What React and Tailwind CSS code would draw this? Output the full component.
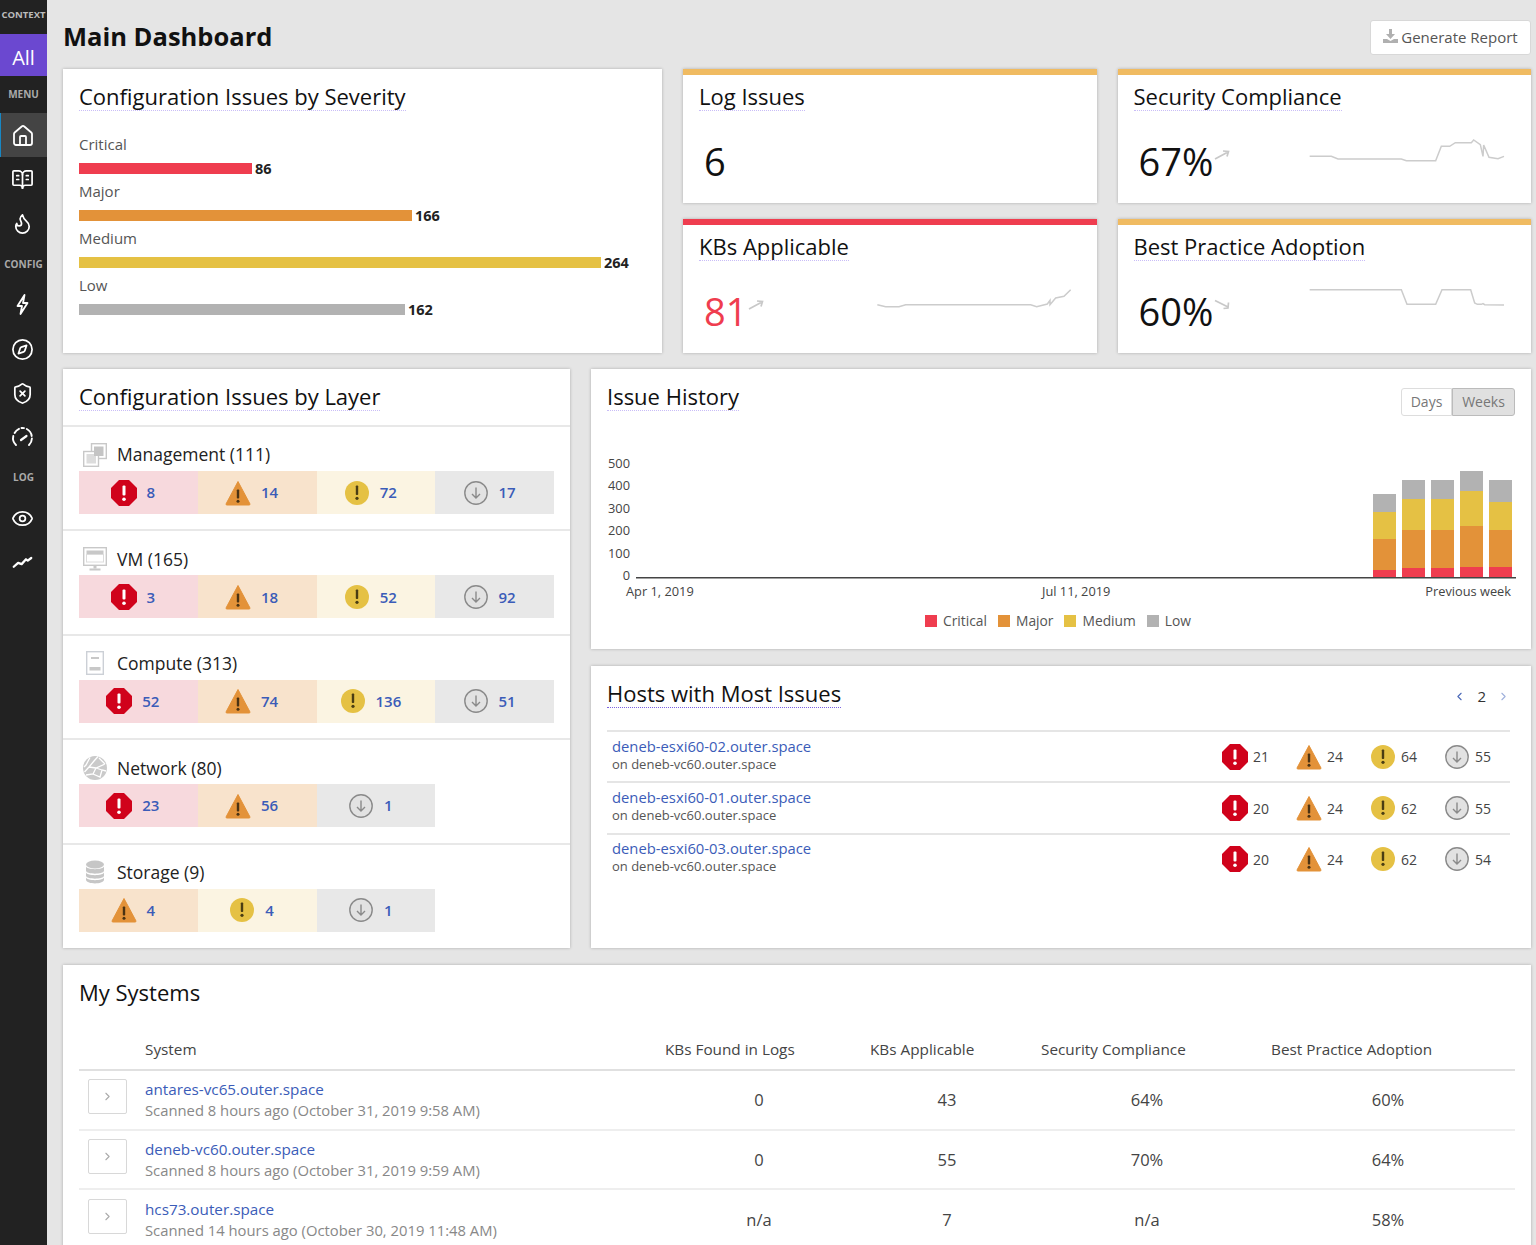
import React from "react";
import { Home, BookOpenText, Flame, Compass, ShieldX, Eye, ChevronLeft, ChevronRight } from "lucide-react";

// severity icons, shared by the layer list and the hosts list
const Critical = () => (
    <svg width="26" height="26" viewBox="0 0 26 26" className="shrink-0">
        <polygon points="8,0 18,0 26,8 26,18 18,26 8,26 0,18 0,8" fill="#d0021b" strokeLinejoin="round" />
        <rect x="11.5" y="5.5" width="3" height="10" rx="1" fill="#fff" />
        <circle cx="13" cy="19.3" r="1.8" fill="#fff" />
    </svg>
);

const Major = () => (
    <svg width="26" height="26" viewBox="0 0 26 26" className="shrink-0">
        <path d="M13 1.5 L25 24 Q25.2 25 24 25 L2 25 Q0.8 25 1 24 Z" fill="#e39239" stroke="#e39239" strokeLinejoin="round" />
        <rect x="11.8" y="9.5" width="2.4" height="9" rx="0.8" fill="#4a3213" />
        <circle cx="13" cy="21.3" r="1.5" fill="#4a3213" />
    </svg>
);

const Medium = () => (
    <svg width="26" height="26" viewBox="0 0 26 26" className="shrink-0">
        <circle cx="13" cy="13" r="12" fill="#e5c144" />
        <rect x="11.8" y="5.5" width="2.4" height="9.5" rx="0.8" fill="#4a3d13" />
        <circle cx="13" cy="18.3" r="1.6" fill="#4a3d13" />
    </svg>
);

const Low = () => (
    <svg width="26" height="26" viewBox="0 0 26 26" className="shrink-0">
        <circle cx="13" cy="13" r="11.2" fill="#e2e2e2" stroke="#8a8a8a" strokeWidth="1.4" />
        <path d="M13 7.5 V18 M9 14 L13 18 L17 14" fill="none" stroke="#8a8a8a" strokeWidth="1.4" />
    </svg>
);

const sevIcons = { critical: Critical, major: Major, medium: Medium, low: Low };
const sevBg = { critical: "bg-[#f7d9dd]", major: "bg-[#f8e3cc]", medium: "bg-[#fbf4e2]", low: "bg-[#e8e8e8]" };

// layer icons
const ManagementIcon = () => (
    <svg width="24" height="24" viewBox="0 0 24 24" fill="none">
        <rect x="8.5" y="0.7" width="14.8" height="14.8" stroke="#c8c8c8" strokeWidth="1.4" />
        <rect x="0.7" y="8.5" width="14.8" height="14.8" stroke="#c8c8c8" strokeWidth="1.4" fill="#fff" />
        <rect x="11" y="3.5" width="9.5" height="9.5" fill="#c4c4c4" />
        <rect x="3.5" y="11" width="9.5" height="9.5" fill="#dcdcdc" />
        <rect x="11" y="11" width="2" height="2" fill="#c4c4c4" />
    </svg>
);

const VmIcon = () => (
    <svg width="24" height="24" viewBox="0 0 24 24" fill="none">
        <rect x="0.7" y="0.7" width="22.6" height="17.6" stroke="#c8c8c8" strokeWidth="1.4" />
        <rect x="3.5" y="3.5" width="17" height="4" fill="#c8c8c8" />
        <rect x="3.5" y="7.5" width="17" height="7.5" fill="none" stroke="#dcdcdc" />
        <rect x="10.5" y="18.5" width="3" height="3" fill="#c8c8c8" />
        <rect x="6.5" y="21.5" width="11" height="2" fill="#c8c8c8" />
    </svg>
);

const ComputeIcon = () => (
    <svg width="24" height="24" viewBox="0 0 24 24" fill="none">
        <rect x="3.7" y="0.7" width="16.6" height="22.6" stroke="#ccd0d6" strokeWidth="1.4" />
        <rect x="8" y="6" width="8" height="2" fill="#c8c8c8" />
        <rect x="6.5" y="16" width="11" height="3.5" fill="#c8c8c8" />
    </svg>
);

const NetworkIcon = () => (
    <svg width="24" height="24" viewBox="0 0 24 24">
        <circle cx="12" cy="12" r="12" fill="#cacaca" />
        <path d="M7 1.5 L3 9 L1 11 M15 0.5 L11 5 L6 11 L1.5 16 M6 11 L13 12 L22 8 M13 12 L10 18 L3 19 M13 12 L19 14 L23 15 M10 18 L17 21 L19 14 M16 2 L22 8" fill="none" stroke="#fff" strokeWidth="1.3" />
    </svg>
);

const StorageIcon = () => (
    <svg width="24" height="24" viewBox="0 0 24 24" fill="#c6c6c6">
        <ellipse cx="12" cy="4.5" rx="9" ry="4" />
        <path d="M3 6.5 C4 10 20 10 21 6.5 V11 C20 14.5 4 14.5 3 11 Z" />
        <path d="M3 12.5 C4 16 20 16 21 12.5 V16 C20 19.5 4 19.5 3 16 Z" />
        <path d="M3 17.5 C4 21 20 21 21 17.5 V20 C20 24.5 4 24.5 3 20 Z" />
    </svg>
);

// sidebar icons the icon package has no close match for
const BoltIcon = () => (
    <svg width="23" height="23" viewBox="0 0 23 23" fill="none" stroke="#fff" strokeWidth="1.8" strokeLinejoin="round">
        <path d="M13.5 2 L6.5 13 H11 L9.5 21 L16.5 10 H12 Z" />
    </svg>
);

const GaugeIcon = () => (
    <svg width="23" height="23" viewBox="0 0 23 23" fill="none" stroke="#fff" strokeWidth="1.9" strokeLinecap="round">
        <path d="M5 19 A9.5 9.5 0 0 1 2.3 10" />
        <path d="M3.6 7 A9.5 9.5 0 0 1 8 2.8" />
        <path d="M10.5 2 A9.5 9.5 0 0 1 13 2.1" />
        <path d="M15.8 3 A9.5 9.5 0 0 1 20.7 10" />
        <path d="M20.9 12.5 A9.5 9.5 0 0 1 18 19" />
        <path d="M10 14 L15.5 10" strokeWidth="2.2" />
    </svg>
);

const TrendIcon = () => (
    <svg width="21" height="21" viewBox="0 0 24 24" fill="none" stroke="#fff" strokeWidth="2.6" strokeLinecap="round" strokeLinejoin="round">
        <path d="M2 18 L7 13.5 L11 15 L16 9.5 L18 11 L22 8" />
    </svg>
);

const SideLabel = ({ children, className }) => (
    <div className={`text-center text-[10px] font-bold text-[#aaa] ${className}`}>{children}</div>
);

const SideIcon = ({ icon: Icon, className }) => (
    <div className={`flex justify-center pr-[2px] text-white ${className}`}>
        <Icon size={23} strokeWidth={1.8} />
    </div>
);

const Sidebar = () => (
    <div className="w-[47px] shrink-0 bg-[#222222]">
        <div className="h-[34px] pt-[8px] text-center text-[9.5px] leading-[14px] font-bold text-[#bbb]">CONTEXT</div>
        <div className="h-[42px] bg-[#6b48d0] text-center text-[20px] leading-[47px] text-white">All</div>
        <SideLabel className="mt-[11px] h-[26px] leading-[14px]">MENU</SideLabel>
        <div className="flex h-[44px] items-center justify-center border-l border-[#1787c4] bg-[#444444] pt-[2px] pr-[3px] text-white">
            <Home size={24} strokeWidth={1.8} />
        </div>
        <SideIcon icon={BookOpenText} className="mt-[11px]" />
        <SideIcon icon={Flame} className="mt-[21px]" />
        <SideLabel className="mt-[22px] leading-[14px]">CONFIG</SideLabel>
        <SideIcon icon={BoltIcon} className="mt-[22px]" />
        <SideIcon icon={Compass} className="mt-[22px]" />
        <SideIcon icon={ShieldX} className="mt-[21px]" />
        <SideIcon icon={GaugeIcon} className="mt-[21px]" />
        <SideLabel className="mt-[21px] leading-[14px]">LOG</SideLabel>
        <SideIcon icon={Eye} className="mt-[23px]" />
        <SideIcon icon={TrendIcon} className="mt-[21px]" />
    </div>
);

const Title = ({ children, underline = "border-[#c9bdf7]" }) => (
    <h2 className={`inline-block h-[30px] border-b border-dotted text-[22px] leading-[31px] font-medium text-[#111] ${underline}`}>{children}</h2>
);

const severityBars = [
    { label: "Critical", value: 86, width: "w-[173px]", color: "bg-[#ef3d4f]" },
    { label: "Major", value: 166, width: "w-[333px]", color: "bg-[#e39239]" },
    { label: "Medium", value: 264, width: "w-[522px]", color: "bg-[#e5c144]" },
    { label: "Low", value: 162, width: "w-[326px]", color: "bg-[#b2b2b2]" },
];

const SeverityCard = () => (
    <div className="h-[284px] w-[599px] shrink-0 bg-white px-4 pt-[12px] shadow-[0_0_3px_rgba(0,0,0,0.25)]">
        <Title>Configuration Issues by Severity</Title>
        <div className="mt-[23px]">
            {severityBars.map((b) => (
                <div key={b.label} className="h-[47px]">
                    <div className="h-[24px] text-[15px] leading-[21px] text-[#555]">{b.label}</div>
                    <div className="flex h-[21px] items-center">
                        <div className={`h-[11px] ${b.width} ${b.color}`}></div>
                        <span className="ml-[3px] text-[14.5px] font-bold text-[#222]">{b.value}</span>
                    </div>
                </div>
            ))}
        </div>
    </div>
);

const Arrow = ({ down }) => (
    <svg width="16" height="12" viewBox="0 0 16 12" fill="none" stroke="#c8c8c8" strokeWidth="1.7" className="mt-[-12px] ml-[1px]">
        {down ? <path d="M1 1.5 L14 8 M14.5 3.5 L14 9 L9.5 9.5" /> : <path d="M1 10 L14 3 M9 2 L14.5 2.5 L13 7.5" />}
    </svg>
);

// sparkline points are in the same units, 3 per screen pixel
const Spark = ({ points }) => (
    <svg width="197" height="27" viewBox="595 412 591 81" fill="none" stroke="#cccccc" strokeWidth="4.5" className="absolute top-[62px] right-[26px]">
        <polyline points={points} />
    </svg>
);

const StatCard = ({ title, value, bar, valueColor = "text-[#111]", arrow, spark }) => (
    <div className={`relative h-[134px] border-t-[6px] bg-white px-4 pt-[6px] shadow-[0_0_3px_rgba(0,0,0,0.25)] ${bar}`}>
        <Title>{title}</Title>
        <div className={`mt-[24px] flex items-center pl-[5px] text-[38px] leading-[52px] ${valueColor}`}>
            <span>{value}</span>
            {arrow && <Arrow down={arrow === "down"} />}
        </div>
        {spark && <Spark points={spark} />}
    </div>
);

const layers = [
    { name: "Management (111)", icon: ManagementIcon, counts: [["critical", 8], ["major", 14], ["medium", 72], ["low", 17]] },
    { name: "VM (165)", icon: VmIcon, counts: [["critical", 3], ["major", 18], ["medium", 52], ["low", 92]] },
    { name: "Compute (313)", icon: ComputeIcon, counts: [["critical", 52], ["major", 74], ["medium", 136], ["low", 51]] },
    { name: "Network (80)", icon: NetworkIcon, counts: [["critical", 23], ["major", 56], ["low", 1]] },
    { name: "Storage (9)", icon: StorageIcon, counts: [["major", 4], ["medium", 4], ["low", 1]] },
];

const LayerCard = () => (
    <div className="h-[579px] w-[507px] shrink-0 bg-white shadow-[0_0_3px_rgba(0,0,0,0.25)]">
        <div className="h-[58px] border-b-2 border-[#e8e8e8] px-4 pt-[12px]">
            <Title>Configuration Issues by Layer</Title>
        </div>
        {layers.map((layer) => (
            <div key={layer.name} className="h-[104.4px] border-b-2 border-[#e8e8e8] px-4 last:border-b-0">
                <div className="flex h-[44px] items-center gap-[10px] pt-[11px] pl-[4px]">
                    <layer.icon />
                    <span className="text-[17.5px] font-medium text-[#222]">{layer.name}</span>
                </div>
                <div className="grid h-[43px] grid-cols-4">
                    {layer.counts.map(([sev, n]) => {
                        const Icon = sevIcons[sev];
                        return (
                            <div key={sev} className={`flex items-center justify-center gap-[10px] pr-[11px] ${sevBg[sev]}`}>
                                <Icon />
                                <span className="text-[15px] font-semibold text-[#3b5cb8]">{n}</span>
                            </div>
                        );
                    })}
                </div>
            </div>
        ))}
    </div>
);

const stacks = [
    { x: 1373, top: 494, yellow: 512, orange: 539, red: 570 },
    { x: 1402, top: 480, yellow: 499, orange: 530, red: 568 },
    { x: 1431, top: 480, yellow: 499, orange: 530, red: 568 },
    { x: 1460, top: 471, yellow: 491, orange: 526, red: 567 },
    { x: 1489, top: 480, yellow: 502, orange: 530, red: 567 },
];

const yTicks = [["500", 468], ["400", 490], ["300", 513], ["200", 535], ["100", 558], ["0", 580]];

const HistoryChart = () => (
    <svg width="940" height="168" viewBox="591 437 940 168" fontFamily="'Open Sans', sans-serif" fontSize="12.8" fill="#444">
        {yTicks.map(([t, y]) => (
            <text key={t} x="630" y={y} textAnchor="end">{t}</text>
        ))}
        {stacks.map((s) => (
            <g key={s.x}>
                <rect x={s.x} y={s.top} width="23" height={s.yellow - s.top} fill="#b2b2b2" />
                <rect x={s.x} y={s.yellow} width="23" height={s.orange - s.yellow} fill="#e5c144" />
                <rect x={s.x} y={s.orange} width="23" height={s.red - s.orange} fill="#e39239" />
                <rect x={s.x} y={s.red} width="23" height={577 - s.red} fill="#ef3d4f" />
            </g>
        ))}
        <rect x="636" y="577" width="880" height="1.5" fill="#444" />
        <text x="626" y="596">Apr 1, 2019</text>
        <text x="1042" y="596">Jul 11, 2019</text>
        <text x="1511" y="596" textAnchor="end">Previous week</text>
    </svg>
);

const legend = [
    ["Critical", "bg-[#ef3d4f]"],
    ["Major", "bg-[#e39239]"],
    ["Medium", "bg-[#e5c144]"],
    ["Low", "bg-[#b2b2b2]"],
];

const HistoryCard = () => (
    <div className="h-[280px] bg-white shadow-[0_0_3px_rgba(0,0,0,0.25)]">
        <div className="flex h-[68px] items-start justify-between pt-[12px] pr-4 pl-4">
            <Title>Issue History</Title>
            <div className="mt-[7px] flex text-[14px] text-[#777]">
                <div className="flex h-[28px] w-[51px] items-center justify-center rounded-l-[3px] border border-[#ddd] pb-[2px]">Days</div>
                <div className="flex h-[28px] w-[63px] items-center justify-center rounded-r-[3px] border border-[#bbb] bg-[#e0e0e0] pb-[2px]">Weeks</div>
            </div>
        </div>
        <HistoryChart />
        <div className="mt-[6px] flex items-center justify-center gap-[11px] pr-[6px] text-[13.8px] text-[#555]">
            {legend.map(([name, color]) => (
                <div key={name} className="flex items-center gap-[6px]">
                    <div className={`h-[12px] w-[12px] ${color}`}></div>
                    <span>{name}</span>
                </div>
            ))}
        </div>
    </div>
);

const hosts = [
    { name: "deneb-esxi60-02.outer.space", counts: [21, 24, 64, 55] },
    { name: "deneb-esxi60-01.outer.space", counts: [20, 24, 62, 55] },
    { name: "deneb-esxi60-03.outer.space", counts: [20, 24, 62, 54] },
];

const HostsCard = () => (
    <div className="mt-[17px] h-[282px] bg-white shadow-[0_0_3px_rgba(0,0,0,0.25)]">
        <div className="flex h-[64px] items-start justify-between pt-[12px] pr-[21px] pl-4">
            <Title underline="border-[#7c63e0]">Hosts with Most Issues</Title>
            <div className="mt-[7px] flex items-center gap-[11px] text-[15px] text-[#333]">
                <ChevronLeft size={13} className="text-[#4a68b8]" />
                <span>2</span>
                <ChevronRight size={13} className="text-[#9fb0dc]" />
            </div>
        </div>
        <div className="mr-[21px] ml-4">
            {hosts.map((h) => (
                <div key={h.name} className="flex h-[51.4px] items-center border-t-2 border-[#e5e5e5]">
                    <div className="pb-[6px] pl-[5px]">
                        <div className="text-[14.8px] leading-[20px] text-[#3b5cb8]">{h.name}</div>
                        <div className="text-[13px] leading-[16px] text-[#555]">on deneb-vc60.outer.space</div>
                    </div>
                    <div className="ml-auto flex text-[14px] text-[#444]">
                        {h.counts.map((n, i) => {
                            const Icon = [Critical, Major, Medium, Low][i];
                            return (
                                <div key={i} className="flex w-[74px] items-center gap-[5px] last:w-[66px]">
                                    <Icon />
                                    <span>{n}</span>
                                </div>
                            );
                        })}
                    </div>
                </div>
            ))}
        </div>
    </div>
);

const systems = [
    { name: "antares-vc65.outer.space", scanned: "Scanned 8 hours ago (October 31, 2019 9:58 AM)", vals: ["0", "43", "64%", "60%"] },
    { name: "deneb-vc60.outer.space", scanned: "Scanned 8 hours ago (October 31, 2019 9:59 AM)", vals: ["0", "55", "70%", "64%"] },
    { name: "hcs73.outer.space", scanned: "Scanned 14 hours ago (October 30, 2019 11:48 AM)", vals: ["n/a", "7", "n/a", "58%"] },
];

const SystemsCard = () => (
    <div className="mt-[17px] bg-white px-4 pt-[13px] pb-4 shadow-[0_0_3px_rgba(0,0,0,0.25)]">
        <h2 className="text-[22px] leading-[29px] font-medium text-[#111]">My Systems</h2>
        <div className="grid grid-cols-[66px_520px_188px_188px_212px_262px] border-b-2 border-[#e0e0e0] pt-[32px] pb-[10px] text-[15.3px] leading-[20px] font-medium text-[#444]">
            <div></div>
            <div>System</div>
            <div>KBs Found in Logs</div>
            <div className="pl-[17px]">KBs Applicable</div>
            <div>Security Compliance</div>
            <div className="pl-[18px]">Best Practice Adoption</div>
        </div>
        {systems.map((s) => (
            <div key={s.name} className="grid h-[59.7px] grid-cols-[66px_520px_188px_188px_212px_262px] items-center border-b-2 border-[#eeeeee] text-[16.5px] text-[#444]">
                <div className="pb-[6px] pl-[9px]">
                    <div className="flex h-[35px] w-[39px] items-center justify-center rounded-[2px] border border-[#d8d8d8] text-[#aaa]">
                        <ChevronRight size={13} />
                    </div>
                </div>
                <div>
                    <div className="text-[15.25px] leading-[21px] font-medium text-[#3b5cb8]">{s.name}</div>
                    <div className="text-[14.8px] leading-[20px] text-[#888]">{s.scanned}</div>
                </div>
                <div className="pt-[2px] text-center">{s.vals[0]}</div>
                <div className="pt-[2px] text-center">{s.vals[1]}</div>
                <div className="pt-[2px] text-center">{s.vals[2]}</div>
                <div className="pt-[2px] pl-[8px] text-center">{s.vals[3]}</div>
            </div>
        ))}
    </div>
);

const App = () => {
    return (
        <div className="flex h-[1245px] overflow-hidden bg-[#e5e5e5] font-['Open_Sans',sans-serif]">
            <Sidebar />
            <div className="min-w-0 flex-1 pr-[5px] pl-[16px]">
                <div className="flex h-[69px] items-start justify-between">
                    <h1 className="mt-[18px] text-[25.5px] leading-[36px] font-bold text-[#111]">Main Dashboard</h1>
                    <button className="mt-[20px] flex h-[35px] w-[161px] items-center justify-center gap-[3px] rounded-[3px] border border-[#d8d8d8] bg-white text-[15px] text-[#555]">
                        <svg width="15" height="15" viewBox="0 0 15 15" fill="#b0b0b0" className="mt-[-3px]">
                            <path d="M6 0 H9 V5 H12 L7.5 10 L3 5 H6 Z" />
                            <path d="M0 10 H4 L7.5 12 L11 10 H15 V14 H0 Z" />
                        </svg>
                        Generate Report
                    </button>
                </div>

                <div className="flex gap-[21px]">
                    <SeverityCard />
                    <div className="grid flex-1 grid-cols-2 gap-x-[21px] gap-y-[16px]">
                        <StatCard title="Log Issues" value="6" bar="border-[#f0bb62]" />
                        <StatCard
                            title="Security Compliance"
                            value="67%"
                            bar="border-[#f0bb62]"
                            arrow="up"
                            spark="600,470 665,470 685,478 875,478 890,483 978,483 995,440 1020,440 1037,429 1085,429 1092,421 1112,435 1120,470 1122,436 1138,473 1165,477 1183,470"
                        />
                        <StatCard
                            title="KBs Applicable"
                            value="81"
                            bar="border-[#ef3d4f]"
                            valueColor="text-[#ef3d4f]"
                            arrow="up"
                            spark="605,465 630,471 670,471 690,465 1065,465 1083,471 1115,463 1123,452 1123,465 1140,445 1165,440 1185,420"
                        />
                        <StatCard
                            title="Best Practice Adoption"
                            value="60%"
                            bar="border-[#f0bb62]"
                            arrow="down"
                            spark="600,420 875,420 892,464 978,464 997,420 1083,420 1095,460 1103,464 1115,464 1120,462 1125,465 1183,466"
                        />
                    </div>
                </div>

                <div className="mt-[16px] flex gap-[21px]">
                    <LayerCard />
                    <div className="min-w-0 flex-1">
                        <HistoryCard />
                        <HostsCard />
                    </div>
                </div>

                <SystemsCard />
            </div>
        </div>
    );
};

export default App;
